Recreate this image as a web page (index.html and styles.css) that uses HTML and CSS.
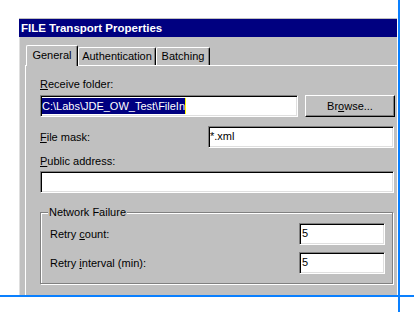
FILE: index.html
```html
<html>

<head>
    <meta charset="utf-8">
    <title>FILE Transport Properties</title>
    <link rel="stylesheet" href="styles.css">
</head>

<body>
    <div class="window">
        <div class="titlebar">FILE Transport Properties</div>
        <div class="client">
            <div class="tabs">
                <div class="tab active general">General</div>
                <div class="tab auth">Authentication</div>
                <div class="tab batch">Batching</div>
            </div>
            <div class="panel">
                <div class="label first"><u>R</u>eceive folder:</div>
                <div class="row">
                    <div class="field folder"><span class="sel">C:\Labs\JDE_OW_Test\FileIn</span><span class="caret"></span></div>
                    <div class="button">Br<u>o</u>wse...</div>
                </div>
                <div class="row mask-row">
                    <div class="label"><u>F</u>ile mask:</div>
                    <div class="field mask">*.xml</div>
                </div>
                <div class="label public-label"><u>P</u>ublic address:</div>
                <div class="field public"></div>

                <div class="group">
                    <span class="legend">Network Failure</span>
                    <div class="grow first-row">
                        <span>Retry <u>c</u>ount:</span>
                        <div class="field small">5</div>
                    </div>
                    <div class="grow">
                        <span>Retry <u>i</u>nterval (min):</span>
                        <div class="field small">5</div>
                    </div>
                </div>
            </div>
        </div>
    </div>

    <!-- selection guides drawn over the capture -->
    <div class="guide-v"></div>
    <div class="guide-h"></div>
</body>

</html>
```

FILE: styles.css
```css
body {
    margin: 0;
    background: #fff;
    font-family: "Liberation Sans", Arial, sans-serif;
    font-size: 11px;
    color: #000;
}

.window {
    width: 378px;
    height: 277px;
    margin: 18px 0 0 19px;
    box-sizing: border-box;
    border-top: 1px solid #c0c0c0;
    background: #c0c0c0;
    overflow: hidden;
    display: flex;
    flex-direction: column;
}

.titlebar {
    height: 18px;
    line-height: 18px;
    background: #000080;
    color: #fff;
    font-weight: bold;
    font-size: 11.5px;
    padding-left: 2px;
    white-space: nowrap;
}

.client {
    flex: 1;
    display: flex;
    flex-direction: column;
    border-left: 1px solid #dfdfdf;
    padding: 8px 0 0 5px;
}

/* tabs */
.tabs {
    display: flex;
    align-items: flex-end;
    padding-left: 1px;
    position: relative;
    z-index: 1;
}

.tab {
    height: 18px;
    box-sizing: border-box;
    border: 1px solid #fff;
    border-bottom: 0;
    border-right-color: #000;
    border-radius: 2px 2px 0 0;
    box-shadow: inset -1px 0 #808080;
    background: #c0c0c0;
    line-height: 16px;
    text-align: center;
    white-space: nowrap;
}

.tab.active {
    height: 21px;
    padding-top: 1px;
    margin-bottom: -1px;
}

.general {
    width: 52px;
}

.auth {
    width: 78px;
}

.batch {
    width: 54px;
}

/* tab page */
.panel {
    flex: 1;
    width: calc(100% + 20px);
    border-top: 1px solid #fff;
    border-left: 1px solid #fff;
    padding-left: 14px;
}

.label {
    line-height: 13px;
    white-space: nowrap;
}

.label.first {
    margin-top: 12px;
}

.row {
    display: flex;
    gap: 7px;
    margin-top: 4px;
}

.mask-row {
    width: 354px;
    justify-content: space-between;
    align-items: center;
    margin-top: 9px;
}

.public-label {
    margin-top: 7px;
}

.field {
    height: 22px;
    box-sizing: border-box;
    background: #fff;
    border: 1px solid;
    border-color: #808080 #fff #fff #808080;
    box-shadow: inset 1px 1px #000, inset -1px -1px #dfdfdf;
    padding-left: 1px;
    line-height: 18px;
    white-space: nowrap;
}

.folder {
    width: 258px;
    padding-top: 2px;
}

.folder .sel {
    display: inline-block;
    vertical-align: top;
    line-height: 16px;
    background: #000080;
    color: #fff;
}

.folder .caret {
    display: inline-block;
    vertical-align: top;
    width: 1px;
    height: 16px;
    background: #ffff00;
}

.mask {
    width: 186px;
}

.public {
    width: 354px;
    margin-top: 3px;
}

.button {
    width: 90px;
    height: 22px;
    box-sizing: border-box;
    border: 1px solid;
    border-color: #fff #000 #000 #fff;
    box-shadow: inset -1px -1px #808080;
    text-align: center;
    line-height: 20px;
}

/* group box */
.group {
    width: 353px;
    box-sizing: border-box;
    margin-top: 19px;
    border: 1px solid #808080;
    box-shadow: inset 1px 1px #fff, 1px 1px #fff;
    padding: 0 7px 9px 9px;
}

.legend {
    display: table;
    margin: -7px 0 0 -2px;
    padding: 0 1px;
    background: #c0c0c0;
    line-height: 13px;
}

.grow {
    display: flex;
    justify-content: space-between;
    align-items: center;
    margin-top: 7px;
}

.grow.first-row {
    margin-top: 4px;
}

.small {
    width: 86px;
    padding-left: 2px;
}

/* blue guide lines over the capture */
.guide-v {
    position: absolute;
    left: 398px;
    top: 0;
    width: 2px;
    height: 312px;
    background: #0a80ff;
}

.guide-h {
    position: absolute;
    left: 0;
    top: 295px;
    width: 414px;
    height: 2px;
    background: #0a80ff;
}
```
